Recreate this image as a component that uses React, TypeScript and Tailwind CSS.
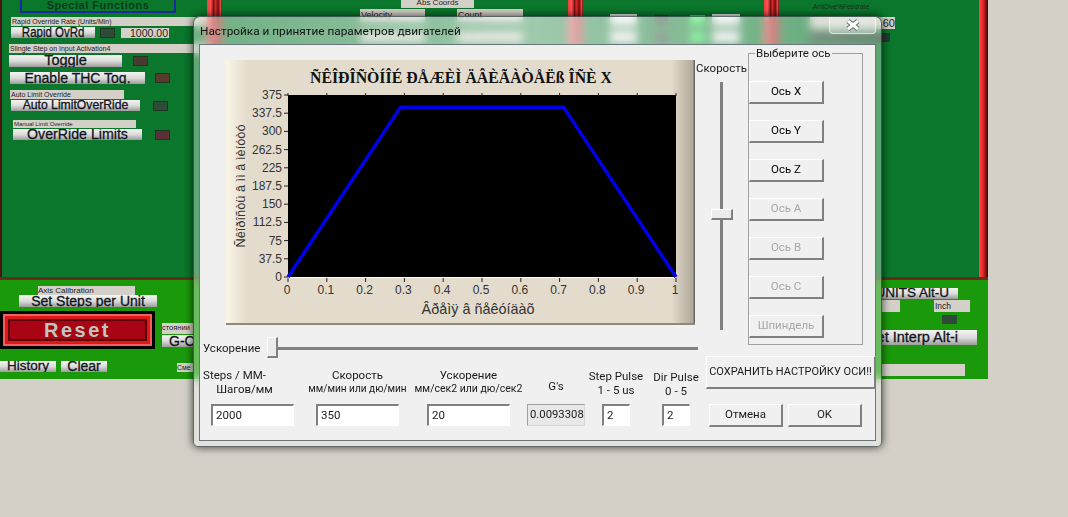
import type { ReactNode } from "react";

const plotX = (t: number) => 62 + 388 * t;
const plotY = (v: number) => 217 - (182 * v) / 375;

const yTicks = ["0", "37.5", "75", "112.5", "150", "187.5", "225", "262.5", "300", "337.5", "375"];
const xTicks = ["0", "0.1", "0.2", "0.3", "0.4", "0.5", "0.6", "0.7", "0.8", "0.9", "1"];

function MachBtn({ className, children }: { className: string; children: ReactNode }) {
  return (
    <div
      className={`flex items-center justify-center overflow-hidden whitespace-nowrap bg-gradient-to-b from-[#f4f4f2] via-[#dcdcda] to-[#9c9c9a] font-['Liberation_Sans',sans-serif] text-[#10141c] [-webkit-text-stroke:0.3px_#10141c] ${className}`}
    >
      {children}
    </div>
  );
}

function Tag({ className, children }: { className: string; children?: ReactNode }) {
  return (
    <div className={`overflow-hidden whitespace-nowrap bg-[#d4d0c8] font-['Liberation_Sans',sans-serif] text-[#222] ${className}`}>
      {children}
    </div>
  );
}

function Led({ className }: { className: string }) {
  return <div className={`h-[10px] w-[15px] shrink-0 border border-[#1c3a22] ${className}`} />;
}

function Pillar() {
  return <div className="w-[15px] shrink-0 bg-[linear-gradient(90deg,#f04040_0%,#ff5050_25%,#701010_45%,#e02828_55%,#701010_75%,#f04040_90%,#701010_100%)]" />;
}

function AxisButton({ label, disabled }: { label: string; disabled?: boolean }) {
  return (
    <div
      className={`flex h-[23px] w-[75px] items-center justify-center border-t border-l border-t-white border-l-white border-r-2 border-b-2 border-r-[#808080] border-b-[#808080] text-[11.5px] ${
        disabled ? "text-[#a8a8a8]" : "text-black"
      }`}
    >
      {label}
    </div>
  );
}

function PushButton({ className, children }: { className: string; children: ReactNode }) {
  return (
    <div className={`flex items-center justify-center whitespace-nowrap border-t border-l border-t-white border-l-white border-r-2 border-b-2 border-r-[#808080] border-b-[#808080] ${className}`}>
      {children}
    </div>
  );
}

function Field({ value, className, children }: { value: string; className: string; children: ReactNode }) {
  return (
    <div className={`flex shrink-0 flex-col ${className}`}>
      <div className="flex h-[37px] flex-col items-center whitespace-nowrap pt-[1px] text-[11.5px] leading-[14px]">{children}</div>
      <div className="flex h-[22px] items-center border-t-2 border-l-2 border-t-[#808080] border-l-[#808080] border-r border-b border-r-white border-b-white bg-white pl-[3px] text-[11.5px]">
        {value}
      </div>
    </div>
  );
}

function SpeedChart() {
  return (
    <svg width="469" height="265" className="block shrink-0 font-['Liberation_Sans',sans-serif]">
      <defs>
        <linearGradient id="panel" x1="0" x2="1" y1="0" y2="0">
          <stop offset="0" stopColor="#fbf5e6" />
          <stop offset="0.045" stopColor="#e3dccd" />
          <stop offset="0.95" stopColor="#e3dccd" />
          <stop offset="0.995" stopColor="#b0a899" />
          <stop offset="1" stopColor="#555" />
        </linearGradient>
      </defs>
      <rect width="469" height="265" fill="url(#panel)" />
      <rect y="263" width="469" height="2" fill="#8f8a80" />
      <text x="235" y="23" textAnchor="middle" fontFamily="'Liberation Serif', serif" fontWeight="700" fontSize="15.8" fill="#111">
        ÑÊÎÐÎÑÒÍÎÉ ÐÅÆÈÌ ÄÂÈÃÀÒÅËß ÎÑÈ X
      </text>
      <rect x="62" y="35" width="388" height="182" fill="#000" />
      <line x1="62" x2="450" y1="217.5" y2="217.5" stroke="#fff" />
      {yTicks.map((label, i) => {
        const y = 217 - (182 * i) / 10;
        return (
          <g key={label}>
            <line x1="58" x2="62" y1={y} y2={y} stroke="#222" />
            <text x="56" y={y + 4} textAnchor="end" fontSize="12" fill="#333">
              {label}
            </text>
          </g>
        );
      })}
      {xTicks.map((label, i) => {
        const x = 62 + 38.8 * i;
        return (
          <g key={label}>
            <line x1={x} x2={x} y1="218" y2="222" stroke="#222" />
            <line x1={x} x2={x} y1="33" y2="36" stroke="#222" />
            <text x={x - 1} y="234" textAnchor="middle" fontSize="12" fill="#333">
              {label}
            </text>
          </g>
        );
      })}
      <polyline
        points={`${plotX(0)},${plotY(0)} ${plotX(0.29)},${plotY(350)} ${plotX(0.71)},${plotY(350)} ${plotX(1)},${plotY(0)}`}
        fill="none"
        stroke="#0000e6"
        strokeWidth="3.5"
      />
      <text x="252" y="254" textAnchor="middle" fontSize="14.4" fill="#333">
        Âðåìÿ â ñåêóíäàõ
      </text>
      <text transform="translate(19 126) rotate(-90)" textAnchor="middle" fontSize="12.8" fill="#333">
        Ñêîðîñòü â ìì â ìèíóòó
      </text>
    </svg>
  );
}

function Dialog() {
  return (
    <div className="absolute left-[193px] top-[16px] h-[431px] w-[689px] rounded-t-[7px] rounded-b-[5px] border border-[#24383a]/70 bg-white/35 font-['Roboto',sans-serif] shadow-[0_0_9px_rgba(0,0,0,0.75)] backdrop-blur-[4px]">
      <div className="flex h-[27px] items-center justify-between rounded-t-[6px] bg-gradient-to-r from-white/10 via-white/40 to-white/0 pl-[6px] pr-[5px]">
        <span className="pt-[2px] text-[11.8px] text-[#111]">Настройка и принятие параметров двигателей</span>
        <div className="-mt-[10px] flex h-[17px] w-[47px] items-center justify-center rounded-b-[4px] border border-t-0 border-white/60 bg-white/25">
          <svg width="16" height="12" viewBox="0 0 16 12">
            <path d="M3 2 L13 10 M13 2 L3 10" stroke="#5a6a6c" strokeWidth="5" />
            <path d="M3 2 L13 10 M13 2 L3 10" stroke="#fff" strokeWidth="3.2" />
          </svg>
        </div>
      </div>

      <div className="ml-[5px] flex h-[397px] w-[677px] border border-[#66767a] bg-[#f0f0f0] text-[#1a1a1a]">
        {/* left: chart, acceleration slider, fields */}
        <div className="flex w-[498px] shrink-0 flex-col">
          <div className="ml-[26px] mt-[15px]">
            <SpeedChart />
          </div>
          <div className="mt-[13px] flex h-[21px] items-center">
            <span className="w-[67px] shrink-0 pl-[3px] text-[11.5px]">Ускорение</span>
            <div className="relative h-[3px] flex-1 bg-[#808080]">
              <div className="absolute -top-[10px] left-0 h-[21px] w-[11px] border-t border-l border-t-white border-l-white border-r-2 border-b-2 border-r-[#808080] border-b-[#808080] bg-[#ececec]" />
            </div>
          </div>
          <div className="mt-[8px] flex">
            <Field value="2000" className="ml-[11px] w-[83px]">
              <span className="-ml-[36px]">Steps / MM-</span>
              <span className="-ml-[16px]">Шагов/мм</span>
            </Field>
            <Field value="350" className="ml-[22px] w-[83px]">
              <span>Скорость</span>
              <span className="text-[10.1px]">мм/мин или дю/мин</span>
            </Field>
            <Field value="20" className="ml-[28px] w-[83px]">
              <span>Ускорение</span>
              <span className="text-[10.5px]">мм/сек2 или дю/сек2</span>
            </Field>
            <div className="ml-[17px] flex w-[58px] shrink-0 flex-col">
              <div className="flex h-[37px] items-end justify-center pb-[11px] text-[11.5px] leading-[14px]">G's</div>
              <div className="flex h-[22px] items-center border border-[#d8d8d8] border-t-[#a0a0a0] border-l-[#a0a0a0] bg-[#e8e8e8] pl-[2px] text-[11.3px]">0.0093308</div>
            </div>
            <Field value="2" className="ml-[17px] w-[28px]">
              <span className="pt-[1px]">Step Pulse</span>
              <span>1 - 5 us</span>
            </Field>
            <Field value="2" className="ml-[32px] w-[28px]">
              <span className="pt-[2px]">Dir Pulse</span>
              <span>0 - 5</span>
            </Field>
          </div>
        </div>

        {/* right: speed slider, axis group, actions */}
        <div className="flex flex-1 flex-col">
          <div className="flex pt-[8px]">
            <div className="flex w-[50px] shrink-0 flex-col items-center pt-[9px]">
              <span className="-ml-[3px] text-[11.5px] leading-[12px]">Скорость</span>
              <div className="relative -ml-[4px] mt-[8px] h-[248px] w-[3px] bg-[#808080]">
                <div className="absolute -left-[9px] top-[127px] h-[11px] w-[22px] border-t border-l border-t-white border-l-white border-r-2 border-b-2 border-r-[#808080] border-b-[#808080] bg-[#ececec]" />
              </div>
            </div>
            <div className="relative flex h-[292px] w-[115px] shrink-0 flex-col gap-[16px] border border-[#a0a0a0] pt-[27px]">
              <span className="absolute -top-[8px] left-[6px] bg-[#f0f0f0] px-[1px] text-[11.5px] leading-[14px]">Выберите ось</span>
              <AxisButton label="Ось X" />
              <AxisButton label="Ось Y" />
              <AxisButton label="Ось Z" />
              <AxisButton label="Ось A" disabled />
              <AxisButton label="Ось B" disabled />
              <AxisButton label="Ось C" disabled />
              <AxisButton label="Шпиндель" disabled />
            </div>
          </div>
          <PushButton className="ml-[8px] mt-[11px] h-[33px] w-[170px] text-[11px]">СОХРАНИТЬ НАСТРОЙКУ ОСИ!!</PushButton>
          <div className="ml-[11px] mt-[15px] flex gap-[5px]">
            <PushButton className="h-[23px] w-[74px] text-[11.5px]">Отмена</PushButton>
            <PushButton className="h-[23px] w-[74px] text-[11.5px]">OK</PushButton>
          </div>
        </div>
      </div>
    </div>
  );
}

export default function App() {
  return (
    <div className="relative h-[517px] w-[1068px] overflow-hidden bg-[#d4d0c8]">
      <div className="flex w-[988px] flex-col">
        {/* upper green screen */}
        <div className="flex h-[280px] border-b-[3px] border-b-[#6b2a1c] bg-[#0a772c]">
          <div className="w-[207px] shrink-0 border-l-2 border-l-[#4a1510]">
            <div className="ml-[18px] flex h-[13px] w-[156px] items-center justify-center overflow-hidden border-2 border-t-0 border-[#1a2c9a] font-['Liberation_Sans',sans-serif] text-[11px] font-bold tracking-[0.5px] text-[#0c3a1c]">
              Special Functions
            </div>
            <Tag className="ml-[9px] mt-[4px] h-[9px] text-[7px] leading-[9px]">
              <span className="pl-[1px]">Rapid Override Rate (Units/Min)</span>
            </Tag>
            <div className="ml-[9px] mt-[1px] flex items-center">
              <MachBtn className="h-[11px] w-[84px] text-[14px]">
                <span className="inline-block scale-x-[0.82]">Rapid OvRd</span>
              </MachBtn>
              <Led className="ml-[5px] bg-[#2f4a38]" />
              <Tag className="ml-[6px] h-[10px] w-[48px] pr-[1px] text-right text-[10.5px] leading-[11px]">1000.00</Tag>
            </div>
            <Tag className="ml-[7px] mt-[6px] h-[9px] text-[7px] leading-[9px]">
              <span className="pl-[1px]">Slingle Step on Input Activation4</span>
            </Tag>
            <div className="ml-[7px] mt-[2px] flex items-center">
              <MachBtn className="h-[12px] w-[113px] text-[14.5px]">Toggle</MachBtn>
              <Led className="ml-[11px] bg-[#4a3a30]" />
            </div>
            <div className="ml-[8px] mt-[5px] flex items-center">
              <MachBtn className="h-[12px] w-[135px] text-[14px]">Enable THC Tog.</MachBtn>
              <Led className="ml-[10px] bg-[#5a3a2c]" />
            </div>
            <Tag className="ml-[8px] mt-[6px] h-[9px] w-[114px] text-[7px] leading-[9px]">
              <span className="pl-[1px]">Auto Limit Override</span>
            </Tag>
            <div className="ml-[9px] mt-[1px] flex items-center">
              <MachBtn className="h-[11px] w-[129px] text-[12.2px]">Auto LimitOverRide</MachBtn>
              <Led className="ml-[13px] bg-[#2f4a38]" />
            </div>
            <Tag className="ml-[11px] mt-[9px] h-[8px] w-[123px] text-[6px] leading-[8px]">
              <span className="pl-[1px]">Manual Limit Override</span>
            </Tag>
            <div className="ml-[11px] mt-[1px] flex items-center">
              <MachBtn className="h-[11px] w-[129px] text-[14.2px]">OverRide Limits</MachBtn>
              <Led className="ml-[13px] bg-[#5a3038]" />
            </div>
          </div>
          <Pillar />
          <div className="w-[346px] shrink-0">
            <Tag className="ml-[179px] h-[8px] w-[73px] text-center text-[8px] leading-[6px]">Abs Coords</Tag>
            <div className="ml-[138px] mt-[1px] flex gap-[32px]">
              <Tag className="h-[13px] w-[65px] pl-[1px] text-[9px] leading-[13px]">Velocity</Tag>
              <Tag className="h-[13px] w-[66px] pl-[1px] text-[9px] leading-[13px]">Count</Tag>
            </div>
            <div className="ml-[138px] mt-[10px] flex gap-[32px]">
              <Tag className="h-[10px] w-[65px]" />
              <Tag className="h-[10px] w-[66px]" />
            </div>
          </div>
          <Pillar />
          <div className="flex w-[181px] shrink-0 flex-col gap-[5px] pl-[27px] pt-[14px]">
            {[0, 1].map((row) => (
              <div key={row} className="flex items-center">
                <div className="h-[12px] w-[27px] bg-[#e8e8ea]" />
                <div className="ml-[18px] h-[10px] w-[13px] bg-[#263a30]" />
                <div className="ml-[22px] h-[10px] w-[15px] bg-[#28f050]" />
                <div className="ml-[7px] h-[12px] w-[28px] bg-[#e8e8ea]" />
              </div>
            ))}
          </div>
          <Pillar />
          <div className="w-[200px] shrink-0 pt-[4px]">
            <div className="ml-[34px] font-['Liberation_Sans',sans-serif] text-[6.5px] leading-[6px] text-[#1c2c20]">AntiDive%Feedrate</div>
            <Tag className="ml-[31px] mt-[7px] h-[12px] w-[85px] text-right text-[11px] leading-[12px]">60</Tag>
            <div className="ml-[31px] mt-[4px] h-[9px] w-[80px] bg-[#263a2c]" />
          </div>
          <div className="w-[9px] shrink-0 bg-gradient-to-r from-[#ff4a4a] via-[#e02020] to-[#300808]" />
        </div>

        {/* lower green screen */}
        <div className="flex h-[99px] justify-between bg-[#1a9a0a]">
          <div className="w-[193px] shrink-0">
            <Tag className="ml-[38px] mt-[6px] h-[9px] w-[97px] text-[8px] leading-[9px]">Axis Calibration</Tag>
            <MachBtn className="ml-[19px] h-[12px] w-[138px] text-[14px]">Set Steps per Unit</MachBtn>
            <div className="mt-[4px] flex items-start">
              <div className="h-[38px] w-[155px] shrink-0 bg-black p-[3px]">
                <div className="h-full border-2 border-[#f06060] bg-[#e01818] p-[3px]">
                  <div className="flex h-full w-full items-center justify-center border-2 border-[#5a0008] bg-[#a80414] font-['Liberation_Sans',sans-serif] text-[20px] font-bold leading-[18px] tracking-[2.5px] text-[#bcc8c0]">
                    Reset
                  </div>
                </div>
              </div>
              <div className="ml-[7px] mt-[12px] w-[31px]">
                <Tag className="h-[11px] text-[7.5px] leading-[10px]">стоянии</Tag>
                <MachBtn className="mt-[1px] h-[12px] justify-start pl-[7px] text-[14px]">G-C</MachBtn>
              </div>
            </div>
            <div className="mt-[12px] flex">
              <MachBtn className="h-[11px] w-[56px] text-[13.5px]">History</MachBtn>
              <MachBtn className="ml-[5px] h-[11px] w-[46px] text-[14px]">Clear</MachBtn>
              <Tag className="ml-[70px] mt-[2px] h-[9px] w-[16px] text-[7px] leading-[9px]">Сме</Tag>
            </div>
          </div>
          <div className="w-[106px] shrink-0">
            <MachBtn className="mt-[8px] h-[11px] w-[76px] justify-end pr-[9px] text-[13.5px]">UNITS Alt-U</MachBtn>
            <div className="mt-[1px] flex">
              <Tag className="h-[12px] w-[18px]" />
              <Tag className="ml-[34px] h-[12px] w-[36px] pl-[1px] text-[8.5px] leading-[12px]">Inch</Tag>
            </div>
            <div className="ml-[60px] mt-[3px] h-[9px] w-[15px] bg-[#2f4a38]" />
            <MachBtn className="mt-[6px] h-[15px] w-[95px] justify-end pr-[19px] text-[14.5px]">et Interp Alt-i</MachBtn>
            <Tag className="mt-[19px] h-[12px] w-[83px]" />
          </div>
        </div>
      </div>

      <Dialog />
    </div>
  );
}
